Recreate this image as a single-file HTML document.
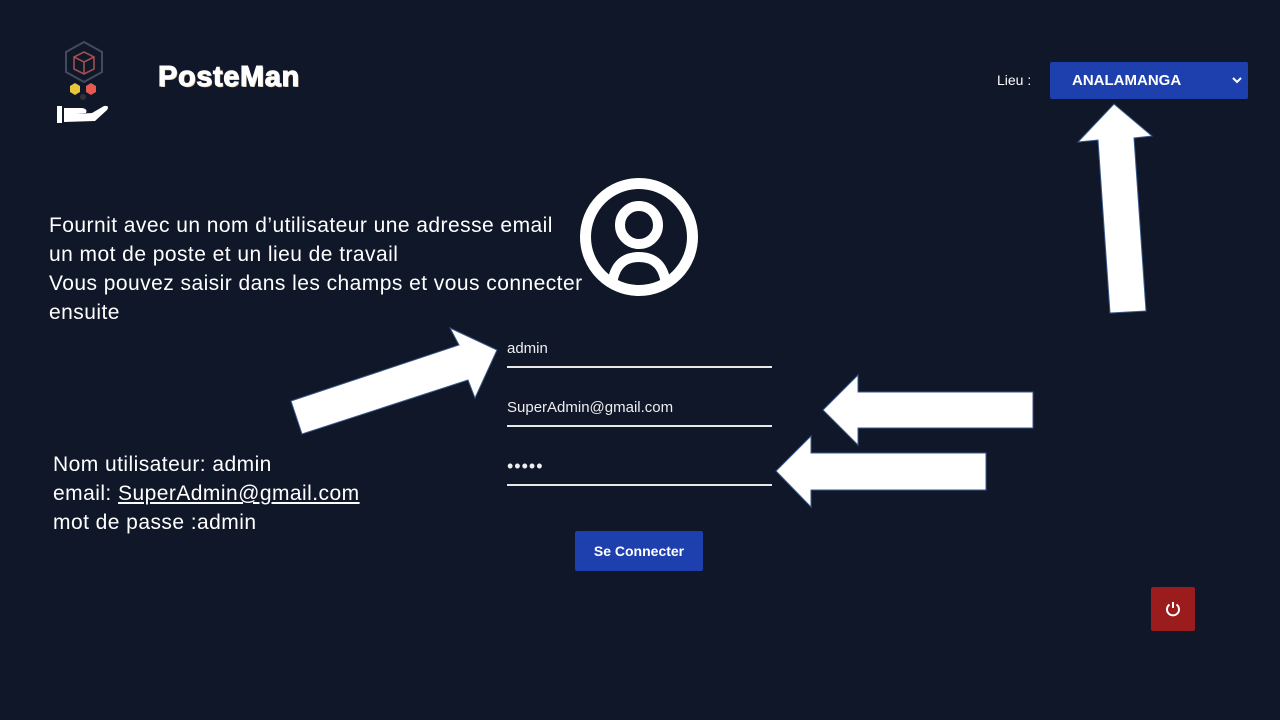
<!DOCTYPE html>
<html><head><meta charset="utf-8"><style>
body{margin:0;width:1280px;height:720px;background:#0f1729;overflow:hidden;position:relative;font-family:"Liberation Sans",sans-serif;color:#fff}
.a{position:absolute}
.txt{font-size:21px;letter-spacing:0.45px;line-height:29px;white-space:nowrap}
.inp{position:absolute;left:507px;width:265px;border-bottom:2px solid #e8e8e8;font-size:15px;color:#eee}
</style></head><body>
<svg class="a" style="left:0;top:0" width="1280" height="720">
<polygon points="84,42 102,52 102,72 84,82 66,72 66,52" fill="none" stroke="#444a5c" stroke-width="2"/>
<g fill="none" stroke="#a05050" stroke-width="1.6"><polygon points="84,52 94,57 94,69 84,74 74,69 74,57"/><polyline points="74,57 84,62 94,57"/><line x1="84" y1="62" x2="84" y2="74"/></g>
<polygon points="75,83 80,86 80,92 75,95 70,92 70,86" fill="#e8c53a"/>
<polygon points="91,83 96,86 96,92 91,95 86,92 86,86" fill="#e85a50"/>
<circle cx="83" cy="97" r="3" fill="#333"/>
<rect x="57" y="106" width="5" height="17" fill="#fff"/>
<path d="M64,108 L82,108 Q88,109 86,113 L76,114 L92,113 L104,106 Q110,105 107,110 L95,121 L64,122 Z" fill="#fff"/>
<circle cx="639" cy="237" r="53.5" fill="none" stroke="#fff" stroke-width="11"/>
<circle cx="639" cy="225" r="19" fill="none" stroke="#fff" stroke-width="10"/>
<path d="M612,285 Q615,257 639,257 Q663,257 666,285" fill="none" stroke="#fff" stroke-width="10"/>
<g fill="#fff" stroke="#3b5a8a" stroke-width="1">
<polygon points="1114,104 1152,136 1134,138 1146,311 1110,313 1098,140 1078,142"/>
<polygon points="823,410 858,375 858,392 1033,392 1033,428 858,428 858,445"/>
<polygon points="776,471 811,436 811,453 986,453 986,490 811,490 811,507"/>
<polygon points="291,401 459,345 450,328 497,350 475,398 468,380 302,434"/>
</g>
</svg>
<div class="a" style="left:158px;top:61px;font-size:29px;font-weight:bold;letter-spacing:0.6px;-webkit-text-stroke:1px #fff;text-shadow:1px 1px 0 #c9b08a">PosteMan</div>
<div class="a" style="left:997px;top:72px;font-size:14px">Lieu :</div>
<div class="a" style="left:1050px;top:62px;width:198px;height:37px;background:#1e3fae;border-radius:2px;font-size:15px;font-weight:bold;line-height:37px"><span style="margin-left:22px">ANALAMANGA</span>
<svg class="a" style="right:6px;top:14px" width="10" height="8"><polyline points="1,2 5,6 9,2" fill="none" stroke="#fff" stroke-width="2"/></svg></div>
<div class="a txt" style="left:49px;top:211px">Fournit avec un nom d’utilisateur une adresse email<br>un mot de poste et un lieu de travail<br>Vous pouvez saisir dans les champs et vous connecter<br>ensuite</div>
<div class="a txt" style="left:53px;top:450px">Nom utilisateur: admin<br>email: <u>SuperAdmin@gmail.com</u><br>mot de passe :admin</div>
<div class="inp" style="top:340px;height:26px">admin</div>
<div class="inp" style="top:399px;height:26px">SuperAdmin@gmail.com</div>
<div class="inp" style="top:456px;height:28px;font-size:18px;letter-spacing:1px">•••••</div>
<div class="a" style="left:575px;top:531px;width:128px;height:40px;background:#1e3fae;border-radius:2px;text-align:center;line-height:40px;font-size:14px;font-weight:bold">Se Connecter</div>
<div class="a" style="left:1151px;top:587px;width:44px;height:44px;background:#9b1c1c;border-radius:2px">
<svg width="44" height="44"><path d="M18.5,17.5 A6,6 0 1 0 25.5,17.5" fill="none" stroke="#fff" stroke-width="2"/><line x1="22" y1="15" x2="22" y2="21" stroke="#fff" stroke-width="2"/></svg></div>
</body></html>
